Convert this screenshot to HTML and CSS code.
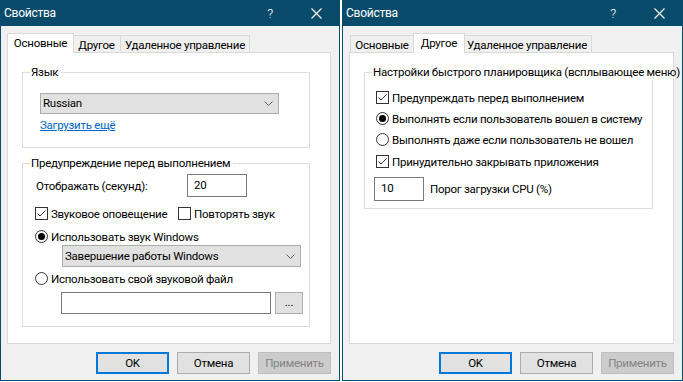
FILE: index.html
```html
<!DOCTYPE html>
<html>
<head>
    <meta charset="utf-8">
    <title>Свойства</title>
    <link rel="stylesheet" href="styles.css">
</head>
<body>
<div class="desk">

    <!-- Dialog 1: tab "Основные" -->
    <div class="dialog">
        <div class="titlebar">
            <span class="title">Свойства</span>
            <span class="caption-btn help">?</span>
            <span class="caption-btn"><svg width="11" height="11" viewBox="0 0 11 11"><path d="M0.5 0.5 L10.5 10.5 M10.5 0.5 L0.5 10.5" stroke="#fff" stroke-width="1.1" fill="none"/></svg></span>
        </div>
        <div class="content">
            <div class="tabs">
                <div class="tab tab-main active">Основные</div>
                <div class="tab tab-other">Другое</div>
                <div class="tab tab-remote">Удаленное управление</div>
            </div>
            <div class="panel">
                <fieldset class="group group-lang">
                    <legend>Язык</legend>
                    <div class="group-body">
                        <div class="combo combo-lang">
                            <span>Russian</span>
                            <svg width="9" height="5" viewBox="0 0 9 5"><polyline points="0.5,0.5 4.5,4.5 8.5,0.5" stroke="#606060" fill="none"/></svg>
                        </div>
                        <a class="link" href="#more">Загрузить ещё</a>
                    </div>
                </fieldset>

                <fieldset class="group group-warn">
                    <legend>Предупреждение перед выполнением</legend>
                    <div class="group-body">
                        <div class="row row-seconds">
                            <span class="seconds-label">Отображать (секунд):</span>
                            <div class="edit edit-seconds">20</div>
                        </div>
                        <div class="row row-sound">
                            <label class="check check-sound"><span class="box"><svg width="11" height="11" viewBox="0 0 11 11"><polyline points="1.5,5.5 4,8 9.5,2.5" stroke="#333" stroke-width="1" fill="none"/></svg></span>Звуковое оповещение</label>
                            <label class="check"><span class="box"></span>Повторять звук</label>
                        </div>
                        <div class="row row-radio1">
                            <label class="check"><span class="radio on"></span>Использовать звук Windows</label>
                        </div>
                        <div class="combo combo-sound">
                            <span>Завершение работы Windows</span>
                            <svg width="9" height="5" viewBox="0 0 9 5"><polyline points="0.5,0.5 4.5,4.5 8.5,0.5" stroke="#606060" fill="none"/></svg>
                        </div>
                        <div class="row row-radio2">
                            <label class="check"><span class="radio"></span>Использовать свой звуковой файл</label>
                        </div>
                        <div class="row row-file">
                            <div class="edit edit-file"></div>
                            <div class="small-btn">...</div>
                        </div>
                    </div>
                </fieldset>
            </div>
            <div class="buttons">
                <button class="btn default">OK</button>
                <button class="btn">Отмена</button>
                <button class="btn disabled">Применить</button>
            </div>
        </div>
    </div>

    <!-- Dialog 2: tab "Другое" -->
    <div class="dialog second">
        <div class="titlebar">
            <span class="title">Свойства</span>
            <span class="caption-btn help">?</span>
            <span class="caption-btn"><svg width="11" height="11" viewBox="0 0 11 11"><path d="M0.5 0.5 L10.5 10.5 M10.5 0.5 L0.5 10.5" stroke="#fff" stroke-width="1.1" fill="none"/></svg></span>
        </div>
        <div class="content">
            <div class="tabs">
                <div class="tab tab-main">Основные</div>
                <div class="tab tab-other active">Другое</div>
                <div class="tab tab-remote">Удаленное управление</div>
            </div>
            <div class="panel">
                <fieldset class="group group-sched">
                    <legend>Настройки быстрого планировщика (всплывающее меню)</legend>
                    <div class="group-body">
                        <div class="row row-s1">
                            <label class="check"><span class="box"><svg width="11" height="11" viewBox="0 0 11 11"><polyline points="1.5,5.5 4,8 9.5,2.5" stroke="#333" stroke-width="1" fill="none"/></svg></span>Предупреждать перед выполнением</label>
                        </div>
                        <div class="row row-s2">
                            <label class="check"><span class="radio on"></span>Выполнять если пользователь вошел в систему</label>
                        </div>
                        <div class="row row-s2">
                            <label class="check"><span class="radio"></span>Выполнять даже если пользователь не вошел</label>
                        </div>
                        <div class="row row-s3">
                            <label class="check"><span class="box"><svg width="11" height="11" viewBox="0 0 11 11"><polyline points="1.5,5.5 4,8 9.5,2.5" stroke="#333" stroke-width="1" fill="none"/></svg></span>Принудительно закрывать приложения</label>
                        </div>
                        <div class="row row-cpu">
                            <div class="edit edit-cpu">10</div>
                            <span class="cpu-label">Порог загрузки CPU (%)</span>
                        </div>
                    </div>
                </fieldset>
            </div>
            <div class="buttons">
                <button class="btn default">OK</button>
                <button class="btn">Отмена</button>
                <button class="btn disabled">Применить</button>
            </div>
        </div>
    </div>

</div>
</body>
</html>
```

FILE: styles.css
```css
body {
    margin: 0;
    padding: 0;
    background-color: #ffffff;
    font-family: Roboto, "Liberation Sans", Arial, sans-serif;
    font-size: 11.5px;
    letter-spacing: -0.25px;
    color: #000000;
    white-space: nowrap;
}

.desk {
    display: flex;
    gap: 2px;
}

/* Window frame */
.dialog {
    width: 340px;
    height: 381px;
    box-sizing: border-box;
    border: 1px solid #0a4b6b;
    background-color: #f0f0f0;
    display: flex;
    flex-direction: column;
}

.dialog.second {
    width: 341px;
}

.titlebar {
    height: 25px;
    background-color: #0a4b6b;
    color: #ffffff;
    display: flex;
    align-items: center;
}

.title {
    flex: 1;
    padding-left: 3px;
    padding-bottom: 1px;
    font-size: 12px;
}

.caption-btn {
    width: 46px;
    display: flex;
    justify-content: center;
    align-items: center;
}

.caption-btn.help {
    font-size: 13px;
    font-weight: 300;
    padding-bottom: 1px;
}

.content {
    padding: 7px 8px 0 6px;
    display: flex;
    flex-direction: column;
}

/* Tabs */
.tabs {
    display: flex;
    align-items: flex-end;
    height: 19px;
    padding-left: 1px;
}

.tab {
    height: 17px;
    box-sizing: border-box;
    border: 1px solid #d9d9d9;
    border-bottom: none;
    background-color: #f0f0f0;
    text-align: center;
    line-height: 14px;
    padding-top: 2px;
}

.tab-main { width: 64px; }
.tab-other { width: 49px; }
.tab-remote { width: 130px; margin-left: -1px; }

.tab.active {
    height: 20px;
    margin-left: -1px;
    margin-right: -2px;
    margin-bottom: -1px;
    background-color: #ffffff;
    position: relative;
    z-index: 1;
    padding-top: 2px;
}

.tab-main.active { width: 67px; }
.tab-other.active { width: 52px; }

.panel {
    height: 292px;
    box-sizing: border-box;
    border: 1px solid #d9d9d9;
    background-color: #ffffff;
}

/* Group boxes */
.group {
    margin: 12px 0 0 14px;
    padding: 0;
    min-width: 0;
    width: 288px;
    box-sizing: border-box;
    border: 1px solid #dcdcdc;
}

.group legend {
    margin-left: 7px;
    padding: 0 3px 0 1px;
    line-height: 15px;
}

.group-lang {
    height: 83px;
}

.group-lang .group-body {
    padding-left: 17px;
}

.group-warn {
    height: 171px;
    margin-top: 8px;
}

.group-warn .group-body {
    padding-left: 12px;
}

.group-sched {
    width: 289px;
    height: 144px;
}

.group-sched .group-body {
    padding-left: 11px;
}

.row {
    display: flex;
    align-items: center;
    height: 17px;
}

/* Combo boxes */
.combo {
    box-sizing: border-box;
    border: 1px solid #adadad;
    background-color: #e1e1e1;
    display: flex;
    align-items: center;
    justify-content: space-between;
    padding: 0 5px 1px 2px;
}

.combo svg {
    margin-top: 1px;
}

.combo-lang {
    width: 239px;
    height: 21px;
    margin-top: 13px;
}

.combo-sound {
    width: 239px;
    height: 22px;
    margin-left: 27px;
}

.link {
    display: inline-block;
    margin-top: 4px;
    line-height: 15px;
    color: #0066cc;
    text-decoration: underline;
}

/* Edits and buttons */
.edit {
    box-sizing: border-box;
    border: 1px solid #7a7a7a;
    background-color: #ffffff;
    padding-left: 6px;
    display: flex;
    align-items: center;
}

.row-seconds {
    height: 23px;
    margin-top: 3px;
    padding-left: 1px;
}

.seconds-label {
    width: 151px;
}

.edit-seconds {
    width: 60px;
    height: 23px;
    padding-bottom: 2px;
}

.row-sound { margin-top: 8px; }
.row-radio1 { margin-top: 6px; }
.row-radio2 { margin-top: 3px; }

.row-file {
    height: 22px;
    margin-top: 5px;
    padding-left: 26px;
    gap: 4px;
}

.edit-file {
    width: 210px;
    height: 22px;
}

.small-btn {
    width: 28px;
    height: 22px;
    box-sizing: border-box;
    border: 1px solid #adadad;
    background-color: #e1e1e1;
    text-align: center;
    line-height: 18px;
}

.check {
    display: flex;
    align-items: center;
    gap: 3px;
}

.check-sound {
    width: 143px;
}

.box {
    width: 13px;
    height: 13px;
    box-sizing: border-box;
    border: 1px solid #333333;
    background-color: #ffffff;
    display: flex;
    align-items: center;
    justify-content: center;
}

.radio {
    width: 13px;
    height: 13px;
    box-sizing: border-box;
    border: 1px solid #333333;
    border-radius: 50%;
    background-color: #ffffff;
    display: flex;
    align-items: center;
    justify-content: center;
}

.radio.on::after {
    content: "";
    width: 7px;
    height: 7px;
    border-radius: 50%;
    background-color: #000000;
}

.row-s1 { margin-top: 9px; }
.row-s2 { margin-top: 4px; }
.row-s3 { margin-top: 5px; }

.row-cpu {
    height: 24px;
    margin-top: 7px;
    gap: 6px;
}

.edit-cpu {
    width: 50px;
    height: 24px;
    margin-left: -2px;
    padding-bottom: 2px;
}

/* Dialog buttons */
.buttons {
    display: flex;
    justify-content: flex-end;
    gap: 8px;
    margin-top: 8px;
}

.btn {
    width: 73px;
    height: 22px;
    box-sizing: border-box;
    border: 1px solid #adadad;
    background-color: #e1e1e1;
    font-family: inherit;
    font-size: 11.5px;
    letter-spacing: -0.25px;
    color: #000000;
    padding: 0 0 1px 0;
}

.btn.default {
    border: 2px solid #0078d7;
}

.btn.disabled {
    border-color: #bfbfbf;
    background-color: #cccccc;
    color: #838383;
}
```
